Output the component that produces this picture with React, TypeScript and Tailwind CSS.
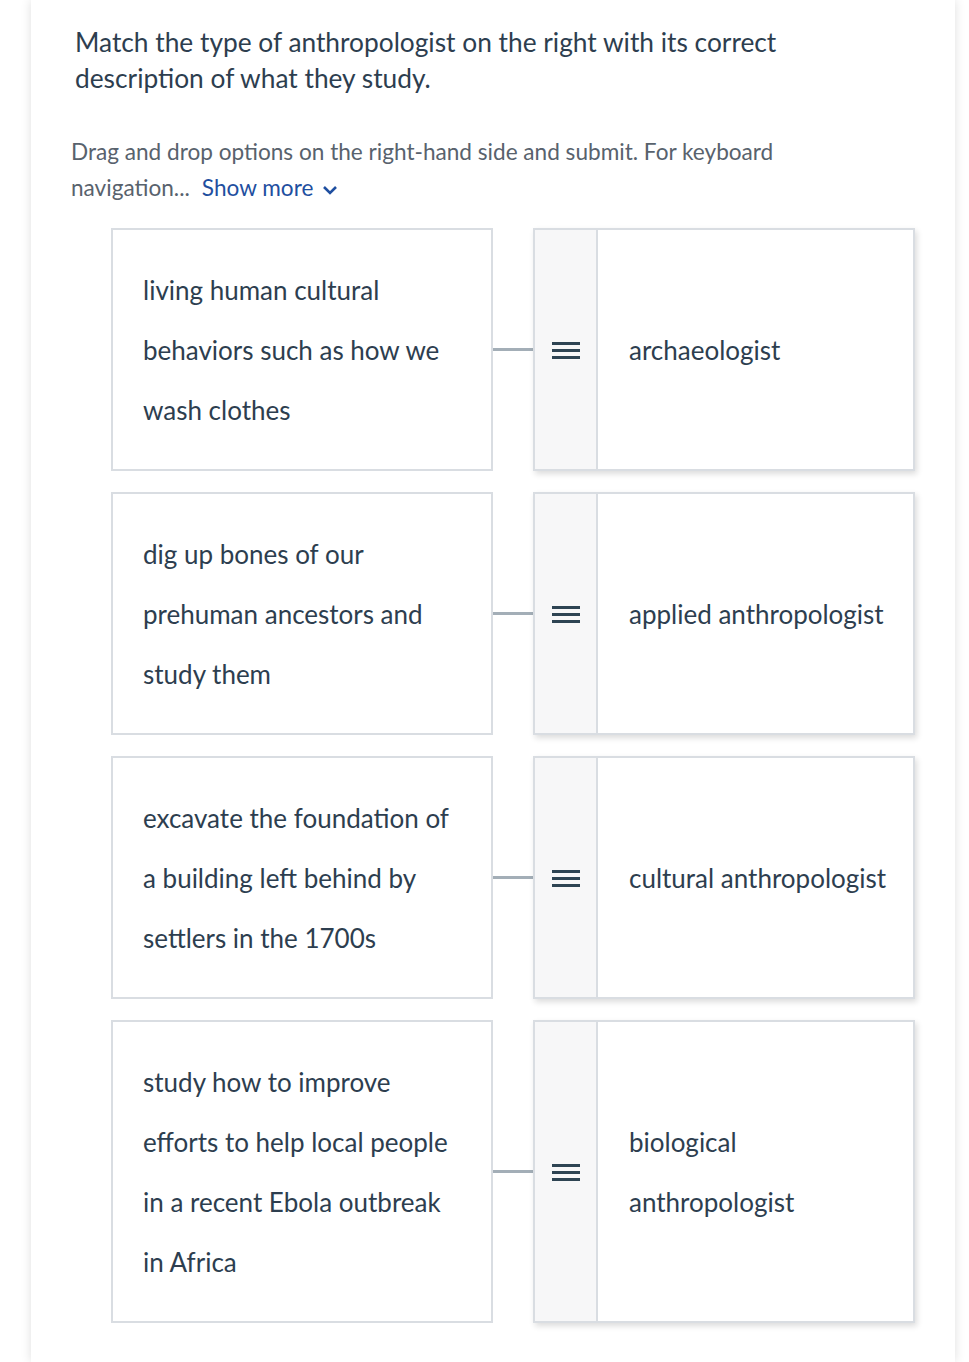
import React from "react";

const rows = [
  {
    left: ["living human cultural", "behaviors such as how we", "wash clothes"],
    right: "archaeologist",
  },
  {
    left: ["dig up bones of our", "prehuman ancestors and", "study them"],
    right: "applied anthropologist",
  },
  {
    left: ["excavate the foundation of", "a building left behind by", "settlers in the 1700s"],
    right: "cultural anthropologist",
  },
  {
    left: ["study how to improve", "efforts to help local people", "in a recent Ebola outbreak", "in Africa"],
    right: "biological anthropologist",
  },
];

function DragHandle() {
  return (
    <svg width="28" height="18" viewBox="0 0 28 18" aria-hidden="true">
      <rect x="0" y="1" width="28" height="3" fill="#2e4453" />
      <rect x="0" y="8" width="28" height="3" fill="#2e4453" />
      <rect x="0" y="15" width="28" height="3" fill="#2e4453" />
    </svg>
  );
}

function Chevron() {
  return (
    <svg width="16" height="10" viewBox="0 0 16 10" aria-hidden="true" className="ml-[9px] mt-[3px]">
      <path d="M2 2 L8 8 L14 2" fill="none" stroke="#1f4fa0" strokeWidth="2.6" />
    </svg>
  );
}

export default function App() {
  return (
    <div className="min-h-screen bg-white font-['Lato','Liberation_Sans',sans-serif] text-[#2d3e4f]">
      <div className="ml-[31px] min-h-screen w-[924px] bg-white pb-[39px] pt-[24px] shadow-[0_0_10px_rgba(0,0,0,0.13)]">
        <h1 className="w-[750px] pl-[44px] text-[26.3px] font-normal leading-[36px]">
          Match the type of anthropologist on the right with its correct description of what they study.
        </h1>

        <div className="mt-[38px] pl-[40px] text-[22.6px] leading-[36px] text-[#58626d]">
          <div className="whitespace-nowrap">Drag and drop options on the right-hand side and submit. For keyboard</div>
          <div className="flex items-center">
            <span>navigation...</span>
            <span className="ml-[12px] text-[#1f4fa0]">Show more</span>
            <Chevron />
          </div>
        </div>

        <div className="mt-[22px] flex flex-col gap-[21px] pl-[80px]">
          {rows.map((row) => (
            <div key={row.right} className="flex">
              <div className="w-[382px] border-2 border-[#d9dde2] px-[30px] pb-[29px] pt-[30px] text-[26px] leading-[60px]">
                {row.left.map((line) => (
                  <div key={line} className="whitespace-nowrap">
                    {line}
                  </div>
                ))}
              </div>
              <div className="flex w-[40px] items-center">
                <div className="h-[3px] w-full bg-[#a3aeb7]" />
              </div>
              <div className="flex w-[382px] border-2 border-[#d9dde2] bg-white shadow-[2px_3px_6px_rgba(0,0,0,0.14)]">
                <div className="flex w-[63px] shrink-0 items-center justify-center border-r-2 border-[#d9dde2] bg-[#f7f7f8]">
                  <DragHandle />
                </div>
                <div className="flex flex-1 items-center pl-[31px] pr-[14px] text-[26px] leading-[60px]">
                  <span>{row.right}</span>
                </div>
              </div>
            </div>
          ))}
        </div>
      </div>
    </div>
  );
}
